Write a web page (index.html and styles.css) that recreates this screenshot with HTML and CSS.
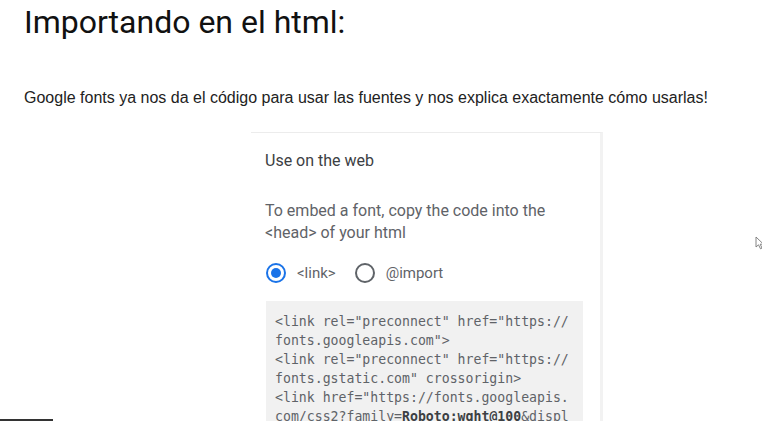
FILE: index.html
```html
<!DOCTYPE html>
<html lang="es">
<head>
<meta charset="utf-8">
<title>Importando en el html</title>
<link rel="stylesheet" href="styles.css">
</head>
<body>
<main class="slide">
  <h1 class="title">Importando en el html:</h1>
  <p class="lead">Google fonts ya nos da el código para usar las fuentes y nos explica exactamente cómo usarlas!</p>
  <section class="card">
    <h2 class="card-title">Use on the web</h2>
    <p class="card-text">To embed a font, copy the code into the<br>&lt;head&gt; of your html</p>
    <div class="radios">
      <label class="radio"><span class="dot checked"></span><span class="radio-label small">&lt;link&gt;</span></label>
      <label class="radio"><span class="dot"></span><span class="radio-label">@import</span></label>
    </div>
    <pre class="code">&lt;link rel="preconnect" href="https://
fonts.googleapis.com"&gt;
&lt;link rel="preconnect" href="https://
fonts.gstatic.com" crossorigin&gt;
&lt;link href="https://fonts.googleapis.
com/css2?family=<b>Roboto:wght@100</b>&amp;displ</pre>
  </section>
</main>
<div class="underline"></div>
<svg class="cursor" width="10" height="14" viewBox="0 0 10 14"><path d="M1 1 L1 11 L3.5 8.8 L5.5 12.8 L7 12 L5.2 8.2 L8.5 8.2 Z" fill="#fff" stroke="#777" stroke-width="0.9" stroke-linejoin="round"/></svg>
</body>
</html>
```
FILE: styles.css
```css
html, body {
  margin: 0;
  padding: 0;
  background: #fff;
  overflow: hidden;
  width: 762px;
  height: 421px;
}
body {
  position: relative;
}
.slide {
  padding: 0 0 0 24px;
}
.title {
  margin: 0;
  padding-top: 2px;
  font-family: Roboto, "Noto Sans", sans-serif;
  font-weight: 400;
  font-size: 32px;
  line-height: 40px;
  color: #111;
}
.lead {
  margin: 46px 0 0 0;
  font-family: "Liberation Sans", Arial, sans-serif;
  font-size: 16px;
  line-height: 20px;
  color: #222;
}
.card {
  margin: 24px 0 0 227px;
  width: 352px;
  height: 289px;
  overflow: hidden;
  box-sizing: border-box;
  border-top: 1px solid #ececec;
  border-right: 3px solid #f2f2f2;
  padding: 18px 18px 0 14px;
  font-family: Roboto, "Open Sans", sans-serif;
}
.card-title {
  margin: 0;
  font-size: 16px;
  font-weight: 400;
  line-height: 20px;
  color: #3c4043;
}
.card-text {
  margin: 29px 0 0 0;
  font-size: 16px;
  line-height: 22px;
  color: #5f6368;
}
.radios {
  display: flex;
  gap: 19px;
  margin: 19px 0 0 1px;
  align-items: center;
}
.radio {
  display: flex;
  align-items: center;
  gap: 11px;
}
.dot {
  width: 20px;
  height: 20px;
  box-sizing: border-box;
  border: 2px solid #5f6368;
  border-radius: 50%;
  position: relative;
}
.dot.checked {
  border-color: #1a73e8;
}
.dot.checked::after {
  content: "";
  position: absolute;
  left: 3px;
  top: 3px;
  width: 10px;
  height: 10px;
  border-radius: 50%;
  background: #1a73e8;
}
.radio-label {
  font-size: 15px;
  color: #5f6368;
}
.radio-label.small {
  font-size: 15px;
}
.code {
  margin: 18px 0 0 1px;
  width: 317px;
  box-sizing: border-box;
  background: #f1f1f1;
  padding: 11px 6px 0 9px;
  font-family: "DejaVu Sans Mono", "Liberation Mono", monospace;
  font-size: 13.2px;
  line-height: 19px;
  color: #5f6368;
  white-space: pre;
  overflow: hidden;
}
.code b {
  color: #3c4043;
  font-weight: 700;
}
.underline {
  position: absolute;
  left: 0;
  top: 419px;
  width: 53px;
  height: 2px;
  background: #333;
}
.cursor {
  position: absolute;
  left: 755px;
  top: 236px;
}
```
